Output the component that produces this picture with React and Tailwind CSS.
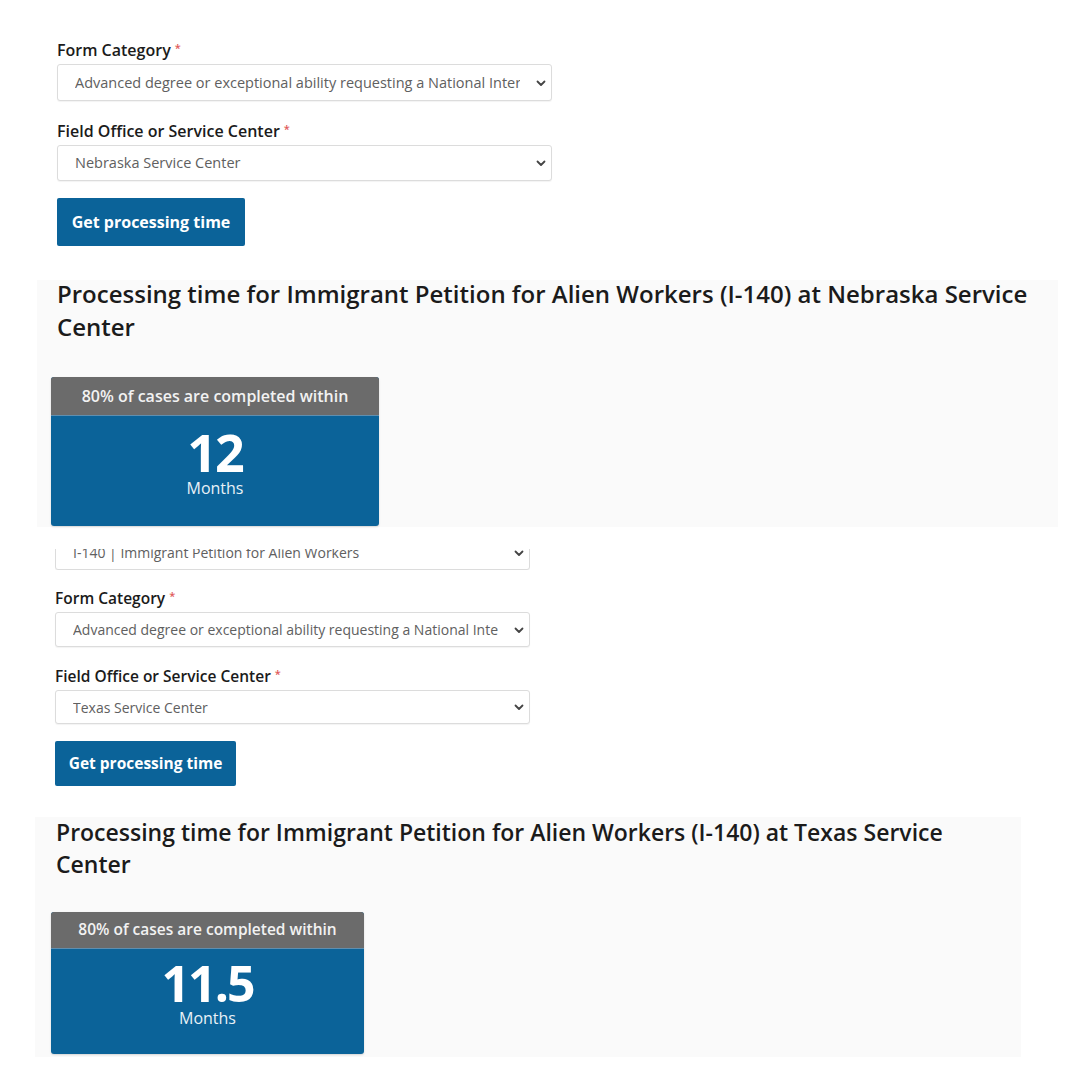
import React from 'react';

const font = { fontFamily: '"Open Sans", "Liberation Sans", sans-serif' };

const Chevron = ({ size = 10 }) => (
    <svg width={size} height={size} viewBox="0 0 10 10" className="shrink-0">
        <polyline points="1.5,3.5 5,7 8.5,3.5" fill="none" stroke="#444" strokeWidth="1.8" strokeLinecap="round" strokeLinejoin="round" />
    </svg>
);

const Label = ({ children, className }) => (
    <div className={`h-[20px] leading-[20px] font-semibold text-[#1b1b1b] ${className}`}>
        {children}
        <span className="text-[#e05a5a] text-[11px] align-top ml-[4px] relative top-[-2px]">*</span>
    </div>
);

const Select = ({ value, className, textClass }) => (
    <div className={`flex items-center bg-white border border-[#dcdcdc] rounded-[3px] shadow-[0_1px_1px_rgba(0,0,0,0.05)] pl-[17px] pr-[5px] ${className}`}>
        <span className={`flex-1 min-w-0 mr-[16px] text-[#606060] whitespace-nowrap overflow-hidden ${textClass}`}>{value}</span>
        <Chevron />
    </div>
);

const ResultCard = ({ value, className, headClass, numClass }) => (
    <div className={`rounded-[3px] overflow-hidden bg-[#0b6399] flex flex-col shadow-[0_1px_2px_rgba(0,0,0,0.15)] ${className}`}>
        <div className={`bg-[#6b6b6b] text-[#f2f2f2] font-semibold flex items-center justify-center border-b border-[#5f8fb0] ${headClass}`}>
            80% of cases are completed within
        </div>
        <div className="flex flex-col items-center text-white">
            <div className={`font-bold tracking-[-2px] ${numClass}`}>{value}</div>
            <div className="text-[#e8f1f7] leading-[20px]">Months</div>
        </div>
    </div>
);

export default function App() {
    return (
        <div className="w-[1080px] h-[1080px] bg-white overflow-hidden" style={font}>
            {/* first screenshot: Nebraska */}
            <div className="pl-[57px] pt-[40px]">
                <Label className="text-[16px]">Form Category</Label>
                <Select
                    className="mt-[4px] w-[495px] h-[37px]"
                    textClass="text-[14.5px]"
                    value="Advanced degree or exceptional ability requesting a National Interest Waiver"
                />
                <Label className="text-[16px] mt-[20px]">Field Office or Service Center</Label>
                <Select className="mt-[4px] w-[495px] h-[36px]" textClass="text-[14.5px]" value="Nebraska Service Center" />
                <button className="block mt-[17px] w-[188px] h-[48px] bg-[#0b6399] rounded-[2px] text-white font-bold text-[16px]">
                    Get processing time
                </button>
            </div>
            <div className="ml-[37px] mt-[34px] w-[1021px] h-[247px] bg-[#fafafa] pl-[14px] flex flex-col items-start">
                <h2 className="ml-[6px] -mt-[3px] text-[24px] leading-[33px] font-semibold text-[#1b1b1b] w-[990px]">
                    Processing time for Immigrant Petition for Alien Workers (I-140) at Nebraska Service Center
                </h2>
                <ResultCard
                    value="12"
                    className="mt-[34px] w-[328px] h-[149px]"
                    headClass="h-[39px] text-[16px]"
                    numClass="text-[52px] leading-[52px] mt-[10px]"
                />
            </div>

            {/* second screenshot: Texas */}
            <div className="pl-[55px] mt-[22px]">
                <div className="h-[21px] w-[475px] overflow-hidden">
                    <Select
                        className="-mt-[14px] w-[475px] h-[35px]"
                        textClass="text-[14px]"
                        value="I-140 | Immigrant Petition for Alien Workers"
                    />
                </div>
                <Label className="text-[15.5px] mt-[18px]">Form Category</Label>
                <Select
                    className="mt-[4px] w-[475px] h-[35px]"
                    textClass="text-[14px]"
                    value="Advanced degree or exceptional ability requesting a National Interest Waiver"
                />
                <Label className="text-[15.5px] mt-[19px]">Field Office or Service Center</Label>
                <Select className="mt-[4px] w-[475px] h-[34px]" textClass="text-[14px]" value="Texas Service Center" />
                <button className="block mt-[17px] w-[181px] h-[45px] bg-[#0b6399] rounded-[2px] text-white font-bold text-[15.5px]">
                    Get processing time
                </button>
            </div>
            <div className="ml-[35px] mt-[31px] w-[986px] h-[240px] bg-[#fafafa] pl-[16px] flex flex-col items-start">
                <h2 className="ml-[5px] -mt-[1px] text-[23px] leading-[32px] font-semibold text-[#1b1b1b] w-[930px]">
                    Processing time for Immigrant Petition for Alien Workers (I-140) at Texas Service Center
                </h2>
                <ResultCard
                    value="11.5"
                    className="mt-[32px] w-[313px] h-[142px]"
                    headClass="h-[37px] text-[15.5px]"
                    numClass="text-[50px] leading-[50px] mt-[9px]"
                />
            </div>
        </div>
    );
}
